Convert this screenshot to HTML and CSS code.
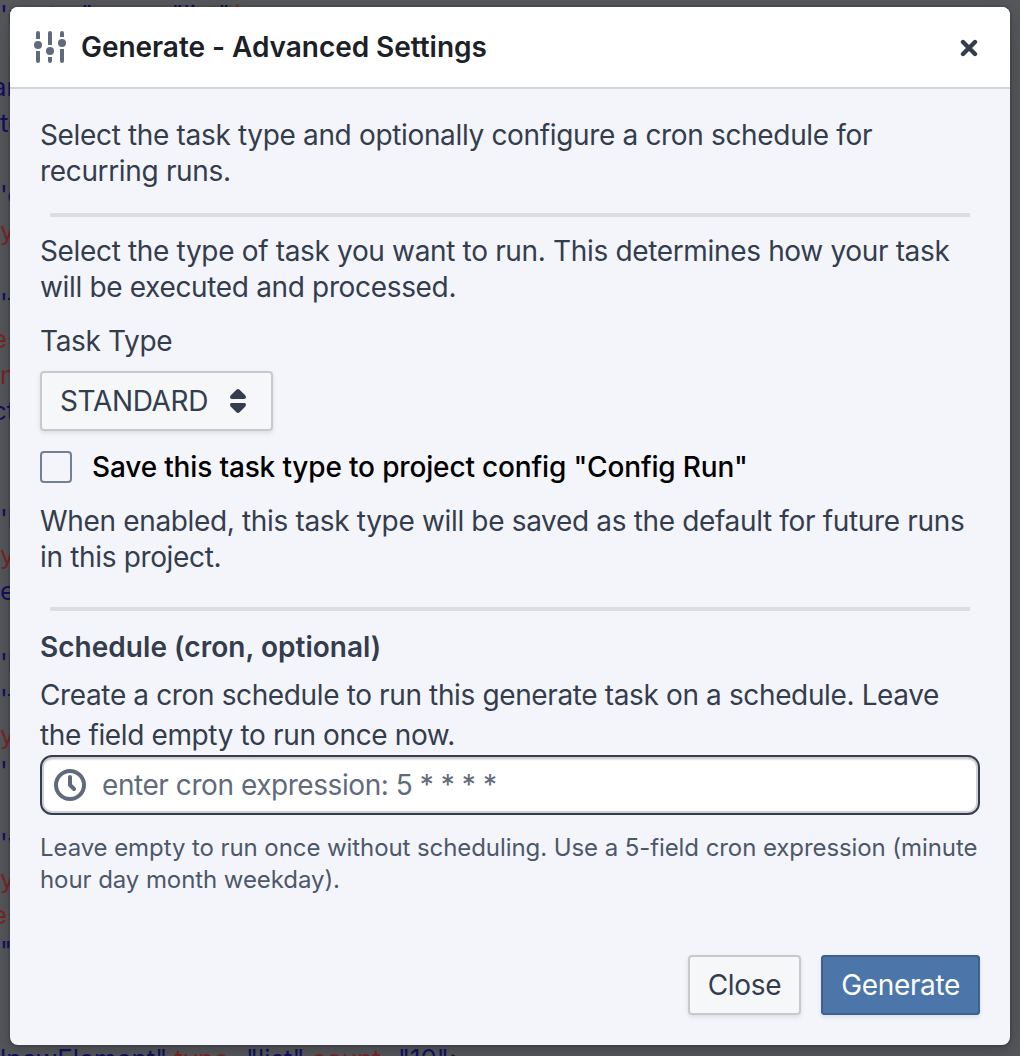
FILE: index.html
```html
<!DOCTYPE html>
<html lang="en">
<head>
    <meta charset="UTF-8">
    <meta name="viewport" content="width=device-width, initial-scale=1.0">
    <title>Generate - Advanced Settings</title>
    <link rel="stylesheet" href="styles.css">
</head>
<body>
    <!-- Editor behind the dialog -->
    <pre class="editor" aria-hidden="true"><span class="str">'rooter"</span> <span class="attr">type</span>=<span class="str">"list"</span><span class="attr">/</span>

<span class="str cut">ar</span>
<span class="str">te</span>

<span class="str">'c</span>
<span class="attr">y</span>

<span class="str">'f</span>
<span class="attr cut">e</span>=
<span class="attr">n</span>
<span class="str cut">ct</span>


<span class="str">'l</span>
<span class="attr">y</span>
<span class="str">e</span>

<span class="str">'l</span>
<span class="str">'f</span>
<span class="attr">y</span>
<span class="str">'</span>

<span class="str">'v</span>
<span class="attr">y</span>
<span class="attr cut">e</span>=
<span class="str">"</span>


<span class="str">lnewElement"</span> <span class="attr">type</span>=<span class="str">"list"</span> <span class="attr">count</span>=<span class="str">"10"</span>&gt;</pre>

    <div class="overlay">
        <div class="dialog" role="dialog">
            <div class="dialog-header">
                <svg class="icon-settings" viewBox="0 0 32 32" width="32" height="32">
                    <path d="M2 8V2a2 2 0 0 1 4 0v6zM2 20h4v10a2 2 0 0 1-4 0zM14 14V2a2 2 0 0 1 4 0v12zM14 26h4v4a2 2 0 0 1-4 0zM26 6V2a2 2 0 0 1 4 0v4zM26 18h4v12a2 2 0 0 1-4 0z"/>
                    <circle cx="4" cy="14" r="4"/>
                    <circle cx="16" cy="20" r="4"/>
                    <circle cx="28" cy="12" r="4"/>
                </svg>
                <h1>Generate - Advanced Settings</h1>
                <button class="icon-button" aria-label="Close dialog">
                    <svg viewBox="0 0 18 18" width="18" height="18">
                        <path d="M3 3l12 12M15 3L3 15"/>
                    </svg>
                </button>
            </div>

            <div class="dialog-body">
                <p>Select the task type and optionally configure a cron schedule for<br>recurring runs.</p>
                <hr>
                <p>Select the type of task you want to run. This determines how your task<br>will be executed and processed.</p>
                <div class="label">Task Type</div>
                <button class="button select">
                    <span>STANDARD</span>
                    <svg viewBox="0 0 16 24" width="16" height="24">
                        <path d="M6.4.7Q8-.7 9.6.7L15.4 6.6Q17 10 14 10H2Q-1 10 .6 6.6ZM6.4 23.3Q8 24.7 9.6 23.3L15.4 17.4Q17 14 14 14H2Q-1 14 .6 17.4Z"/>
                    </svg>
                </button>
                <label class="checkbox">
                    <input type="checkbox">
                    <span>Save this task type to project config "Config Run"</span>
                </label>
                <p>When enabled, this task type will be saved as the default for future runs<br>in this project.</p>
                <hr class="schedule-divider">
                <h2>Schedule (cron, optional)</h2>
                <p class="schedule-text">Create a cron schedule to run this generate task on a schedule. Leave<br>the field empty to run once now.</p>
                <div class="input-group">
                    <svg viewBox="0 0 32 32" width="32" height="32">
                        <circle cx="16" cy="16" r="14"/>
                        <path d="M16 8v8l4 4"/>
                    </svg>
                    <input type="text" placeholder="enter cron expression: 5 * * * *">
                </div>
                <p class="helper">Leave empty to run once without scheduling. Use a 5-field cron expression (minute<br>hour day month weekday).</p>
            </div>

            <div class="dialog-footer">
                <button class="button">Close</button>
                <button class="button primary">Generate</button>
            </div>
        </div>
    </div>
</body>
</html>
```
FILE: styles.css
```css
* {
    box-sizing: border-box;
}

body {
    margin: 0;
    height: 1056px;
    overflow: hidden;
    background-color: #56575b;
    font-family: Inter, "Liberation Sans", sans-serif;
    font-size: 28px;
    line-height: 36px;
}

/* Code behind the dialog */
.editor {
    position: absolute;
    top: -3px;
    left: 0;
    margin: 0;
    font-family: Inter, sans-serif;
    font-size: 25.8px;
    line-height: 36px;
    color: #15171a;
}

.str {
    color: #101062;
}

.attr {
    color: #7a2626;
}

.cut {
    margin-left: -8px;
}

/* Dialog */
.overlay {
    position: absolute;
    inset: 0;
    padding: 7px 10px 11px;
}

.dialog {
    display: flex;
    flex-direction: column;
    height: 1038px;
    background-color: #f4f5fa;
    border-radius: 8px;
    box-shadow: 0 0 0 2px rgba(17, 20, 24, 0.1), 0 4px 8px rgba(17, 20, 24, 0.2), 0 12px 40px rgba(17, 20, 24, 0.1);
}

.dialog-header {
    display: flex;
    align-items: center;
    height: 82px;
    padding: 0 20px 0 24px;
    background-color: #fff;
    border-bottom: 2px solid #d3d4d8;
    border-radius: 8px 8px 0 0;
}

.icon-settings {
    margin-right: 15px;
    fill: #5f6b7c;
}

h1 {
    flex: 1;
    margin: 0;
    font-size: 28px;
    font-weight: 600;
    letter-spacing: -0.04px;
    color: #1c2127;
}

.icon-button {
    display: flex;
    padding: 13px 12px 11px;
    border: none;
    background: none;
}

.icon-button path {
    stroke: #333d4e;
    stroke-width: 4.4;
    stroke-linecap: round;
}

.dialog-body {
    flex: 1;
    padding: 28px 30px 0;
    color: #333d4e;
    letter-spacing: -0.34px;
    white-space: nowrap;
}

p {
    margin: 0;
}

hr {
    height: 4px;
    margin: 24px 10px 16px;
    border: none;
    background-color: #dcdde2;
}

.schedule-divider {
    margin: 32px 10px 18px;
}

.label {
    margin: 18px 0 12px;
}

/* Buttons */
.button {
    display: flex;
    align-items: center;
    justify-content: center;
    height: 60px;
    padding: 0 20px;
    border: none;
    border-radius: 4px;
    background-color: #f6f7f9;
    box-shadow: inset 0 0 0 2px #c8c9cc, 0 2px 4px rgba(17, 20, 24, 0.1);
    font-family: inherit;
    font-size: 28px;
    letter-spacing: -0.34px;
    color: #333d4e;
}

.select {
    width: 233px;
    justify-content: flex-start;
    gap: 22px;
}

.select svg {
    fill: #333d4e;
}

.primary {
    background-color: #4c76a9;
    box-shadow: inset 0 0 0 2px #3f618d, 0 2px 4px rgba(17, 20, 24, 0.1);
    color: #fff;
}

.checkbox {
    display: flex;
    align-items: center;
    gap: 20px;
    margin: 18px 0;
    font-weight: 500;
    letter-spacing: -0.16px;
    color: #000;
}

.checkbox input {
    appearance: none;
    width: 32px;
    height: 32px;
    margin: 0;
    border: 2px solid #738091;
    border-radius: 4px;
}

h2 {
    margin: 0 0 10px;
    font-size: 28px;
    font-weight: 600;
    letter-spacing: 0.03px;
}

.schedule-text {
    line-height: 40px;
    letter-spacing: -0.37px;
}

.input-group {
    display: flex;
    align-items: center;
    gap: 16px;
    height: 60px;
    padding: 0 12px;
    background-color: #fff;
    border: 2px solid #333d4e;
    border-radius: 12px;
    box-shadow: inset 0 0 0 2px #cfd0d3, inset 0 2px 2px rgba(17, 20, 24, 0.35);
}

.input-group svg {
    fill: none;
    stroke: #5f6b7c;
    stroke-width: 4;
    stroke-linecap: round;
    stroke-linejoin: round;
}

.input-group input {
    flex: 1;
    padding: 0;
    border: none;
    outline: none;
    background: none;
    font-family: inherit;
    font-size: 28px;
    letter-spacing: -0.44px;
}

.input-group input::placeholder {
    color: #5f6b7c;
}

.helper {
    margin-top: 17px;
    font-size: 24px;
    line-height: 32px;
    letter-spacing: -0.08px;
    color: #4c586a;
}

.dialog-footer {
    display: flex;
    justify-content: flex-end;
    gap: 20px;
    padding: 0 30px 30px;
}
```
